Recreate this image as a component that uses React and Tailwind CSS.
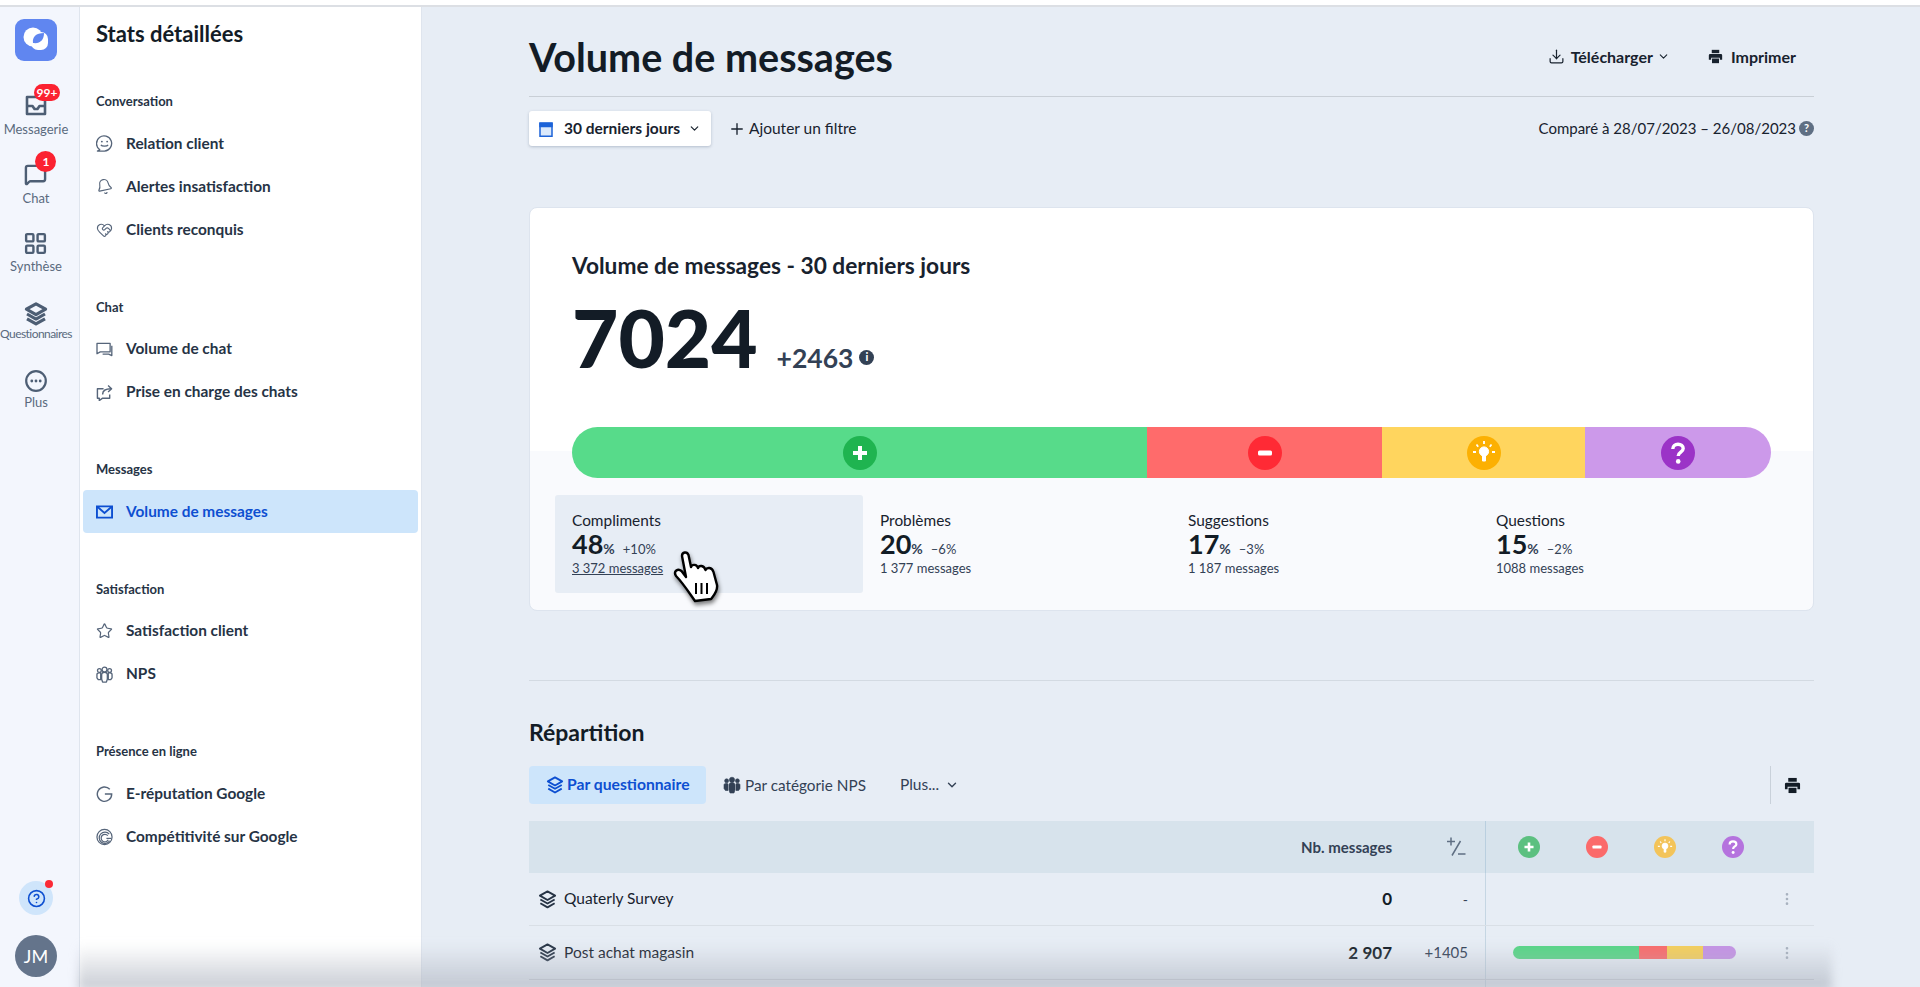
import React from 'react';
import { Bell, HeartHandshake, Star, ChevronDown, Plus, Download, LayoutGrid, MoreVertical, MessageSquare, HelpCircle } from 'lucide-react';

function Inbox({ className }) {
  return (
    <svg viewBox="0 0 22 22" className={className} fill="none" stroke="currentColor" strokeWidth="2.6" strokeLinejoin="round">
      <path d="M2 3h18v17H2z" />
      <path d="M2 12h5.5l2 3h3l2-3H20" />
    </svg>
  );
}

function Stack({ className, strokeWidth = 2 }) {
  return (
    <svg viewBox="0 0 20 20" className={className} fill="none" stroke="currentColor" strokeWidth={strokeWidth} strokeLinejoin="round">
      <path d="M10 1.5 18 6l-8 4.5L2 6z" />
      <path d="m2.5 10 7.5 4.2 7.5-4.2" />
      <path d="m2.5 14 7.5 4.3 7.5-4.3" />
    </svg>
  );
}

function People({ className, filled }) {
  return (
    <svg viewBox="0 0 18 18" className={className} fill={filled ? 'currentColor' : 'none'} stroke="currentColor" strokeWidth={filled ? 0.6 : 1.4} strokeLinejoin="round">
      <circle cx="3.6" cy="4.8" r="2" />
      <circle cx="14.4" cy="4.8" r="2" />
      <path d="M1 9c0-1 1-1.8 2.6-1.8S5 8 5 9v5.5H2.4L1 12.5zM17 9c0-1-1-1.8-2.6-1.8S13 8 13 9v5.5h2.6l1.4-2z" />
      <circle cx="9" cy="3.8" r="2.6" />
      <path d="M6 9c0-1.4 1.2-2.4 3-2.4s3 1 3 2.4v5l-1 3H7l-1-3z" />
    </svg>
  );
}

function PrinterSolid({ className }) {
  return (
    <svg viewBox="0 0 18 18" className={className} fill="currentColor">
      <path d="M4.5 1h9v4h-9z" />
      <path d="M2.5 6h13A1.5 1.5 0 0 1 17 7.5V13h-2.8v-2.6H3.8V13H1V7.5A1.5 1.5 0 0 1 2.5 6z" />
      <path d="M4.8 11.4h8.4V17H4.8z" />
    </svg>
  );
}

function SmileBubble({ className }) {
  return (
    <svg viewBox="0 0 18 18" className={className} fill="none" stroke="currentColor" strokeWidth="1.4">
      <path d="M4 15.6A8 8 0 1 1 9 17H1.5z" strokeLinejoin="round" />
      <circle cx="6.2" cy="7" r="1" fill="currentColor" stroke="none" />
      <circle cx="11.8" cy="7" r="1" fill="currentColor" stroke="none" />
      <path d="M5.2 10.4c1 1.9 6.6 1.9 7.6 0" />
    </svg>
  );
}

function ChatBoxes({ className }) {
  return (
    <svg viewBox="0 0 18 16" className={className} fill="none" stroke="currentColor" strokeWidth="1.4" strokeLinejoin="round">
      <path d="M1 1.5h14v9H4.5L1 12.5z" />
      <path d="M16.8 4v10.5L13.5 13H7" />
    </svg>
  );
}

function ChatShare({ className }) {
  return (
    <svg viewBox="0 0 18 18" className={className} fill="none" stroke="currentColor" strokeWidth="1.5" strokeLinejoin="round">
      <path d="M8 5H1.5v10h2v2.5L7 15h7.5v-4" />
      <path d="M7 11c0-4 3-6 9-6" />
      <path d="M12.8 1.5 16.5 5l-3.7 3.5" />
    </svg>
  );
}

function GoogleG({ className }) {
  return (
    <svg viewBox="0 0 18 18" className={className} fill="none" stroke="currentColor" strokeWidth="1.5">
      <path d="M14.6 4A7.6 7.6 0 1 0 16.6 9H9.4" />
    </svg>
  );
}

function Rings({ className }) {
  return (
    <svg viewBox="0 0 18 18" className={className} fill="none" stroke="currentColor" strokeWidth="1.3">
      <circle cx="9" cy="9" r="8" />
      <path d="M14 6A6 6 0 1 0 14.5 13" />
      <path d="M12.5 7.5A4 4 0 1 0 13 12" />
      <path d="M11 10.5h5" />
    </svg>
  );
}

function MailIcon({ className }) {
  return (
    <svg viewBox="0 0 18 14" className={className} fill="none" stroke="currentColor" strokeWidth="2">
      <path d="M1 1h16v12H1z" />
      <path d="M1.5 1.5 9 8l7.5-6.5" />
    </svg>
  );
}

function MoreCircle() {
  return (
    <svg viewBox="0 0 22 22" className="w-[22px] h-[22px]" fill="none" stroke="currentColor" strokeWidth="2.2">
      <circle cx="11" cy="11" r="9.8" />
      <g fill="currentColor" stroke="none">
        <circle cx="6.8" cy="11" r="1.4" />
        <circle cx="11" cy="11" r="1.4" />
        <circle cx="15.2" cy="11" r="1.4" />
      </g>
    </svg>
  );
}

function Logo() {
  return (
    <svg viewBox="0 0 42 42" className="w-[42px] h-[42px]">
      <rect width="42" height="42" rx="9" fill="#6086f0" />
      <circle cx="18" cy="18" r="9.5" fill="#fff" />
      <rect x="16" y="13" width="17" height="18" rx="7" fill="#fff" />
      <path d="M18 24c-1-6 3-10 11-10 0 7-4 11-11 10z" fill="#6086f0" />
    </svg>
  );
}

function Circle({ kind, color, className }) {
  return (
    <svg viewBox="0 0 34 34" className={className}>
      <circle cx="17" cy="17" r="17" fill={color} />
      {kind === 'plus' && <path d="M17 10v14M10 17h14" stroke="#fff" strokeWidth="4" />}
      {kind === 'minus' && <rect x="10" y="14.5" width="14" height="5" rx="1.5" fill="#fff" />}
      {kind === 'bulb' && (
        <g fill="#fff" stroke="#fff">
          <circle cx="17" cy="15.5" r="4.6" />
          <path d="M15.5 19h3v6h-3z" />
          <path d="M17 5v3M9.5 8.5l1.7 2.2M24.5 8.5l-1.7 2.2M6 16h3M25 16h3" strokeWidth="1.8" />
        </g>
      )}
      {kind === 'question' && (
        <g>
          <path d="M11.8 13c0-3 2.3-4.8 5.2-4.8s5.2 1.7 5.2 4.4c0 3.6-5 3.6-5 7.4" fill="none" stroke="#fff" strokeWidth="3.4" />
          <circle cx="17.2" cy="25.4" r="2.3" fill="#fff" />
        </g>
      )}
    </svg>
  );
}

function Hand({ className }) {
  return (
    <svg viewBox="0 0 46 54" className={className}>
      <path
        d="M9 6C9 2 14 1 15.5 5L18 17C19 14 24 14 25 18C26 15 31 15 32.5 20C34 17 39 17 40.5 22L44 35C45 41 41 45 38 49L22 51C17 44 10 33 3 26C0 21 5 18 8.5 21L13 27Z"
        fill="#fff"
        stroke="#000"
        strokeWidth="2.4"
        strokeLinejoin="round"
      />
      <path d="M23 33v11M28.5 33v11M34 33v11" stroke="#000" strokeWidth="2" />
    </svg>
  );
}

const railItems = [
  { label: 'Messagerie', icon: <Inbox className="w-[22px] h-[22px]" />, badge: '99+', labelClass: 'mt-[4px] text-[13px] leading-4 text-[#5a6a7e] whitespace-nowrap' },
  { label: 'Chat', icon: <MessageSquare size={23} strokeWidth={2.5} />, badge: '1', labelClass: 'mt-[4px] text-[13px] leading-4 text-[#5a6a7e] whitespace-nowrap' },
  { label: 'Synthèse', icon: <LayoutGrid size={25} strokeWidth={2.3} />, labelClass: 'mt-[3px] text-[13px] leading-4 text-[#5a6a7e] whitespace-nowrap' },
  { label: 'Questionnaires', icon: <Stack className="w-[24px] h-[24px] translate-y-[2px]" strokeWidth={2.6} />, labelClass: 'mt-[2px] text-[12px] leading-4 text-[#5a6a7e] tracking-[-0.55px] whitespace-nowrap' },
  { label: 'Plus', icon: <MoreCircle />, labelClass: 'mt-[1px] text-[13px] leading-4 text-[#5a6a7e] whitespace-nowrap' },
];

const menu = [
  {
    title: 'Conversation',
    items: [
      { label: 'Relation client', icon: <SmileBubble className="w-[17px] h-[17px]" /> },
      { label: 'Alertes insatisfaction', icon: <Bell size={17} strokeWidth={1.6} className="-rotate-12" /> },
      { label: 'Clients reconquis', icon: <HeartHandshake size={18} strokeWidth={1.6} /> },
    ],
  },
  {
    title: 'Chat',
    items: [
      { label: 'Volume de chat', icon: <ChatBoxes className="w-[17px] h-[15px]" /> },
      { label: 'Prise en charge des chats', icon: <ChatShare className="w-[17px] h-[17px]" /> },
    ],
  },
  {
    title: 'Messages',
    items: [{ label: 'Volume de messages', active: true, icon: <MailIcon className="w-[17px] h-[14px]" /> }],
  },
  {
    title: 'Satisfaction',
    items: [
      { label: 'Satisfaction client', icon: <Star size={18} strokeWidth={1.7} /> },
      { label: 'NPS', icon: <People className="w-[17px] h-[17px]" /> },
    ],
  },
  {
    title: 'Présence en ligne',
    items: [
      { label: 'E-réputation Google', icon: <GoogleG className="w-[18px] h-[18px]" /> },
      { label: 'Compétitivité sur Google', icon: <Rings className="w-[18px] h-[18px]" /> },
    ],
  },
];

const stats = [
  { label: 'Compliments', pct: '48', delta: '+10%', count: '3\u202f372 messages', hover: true },
  { label: 'Problèmes', pct: '20', delta: '–6%', count: '1\u202f377 messages' },
  { label: 'Suggestions', pct: '17', delta: '–3%', count: '1\u202f187 messages' },
  { label: 'Questions', pct: '15', delta: '–2%', count: '1088 messages' },
];

export default function App() {
  return (
    <div className="relative h-screen w-full overflow-hidden flex flex-col bg-white font-[Lato,sans-serif] text-[#18222e]">
      <div className="h-[7px] shrink-0 border-b-2 border-[#dcdfe4]" />
      <div className="flex flex-1 min-h-0">
        {/* rail */}
        <aside className="w-[80px] shrink-0 pr-[7px] bg-[#f3f6fd] border-r border-[#dfe5ee] flex flex-col items-center text-[#4d5e74]">
          <div className="mt-[12px]">
            <Logo />
          </div>
          <nav className="mt-[32px] flex flex-col gap-[25px] items-center">
            {railItems.map((it) => (
              <div key={it.label} className="relative flex flex-col items-center h-[44px]">
                <div className="relative h-[24px] flex items-center">
                  {it.icon}
                  {it.badge && (
                    <span
                      className={
                        it.badge === '1'
                          ? 'absolute -top-[11px] left-[11px] w-[21px] h-[21px] rounded-full bg-[#fb2231] text-white text-[12px] font-bold flex items-center justify-center'
                          : 'absolute -top-[9px] left-[9px] w-[26px] h-[17px] rounded-full bg-[#fb2231] text-white text-[12px] font-bold flex items-center justify-center'
                      }
                    >
                      {it.badge}
                    </span>
                  )}
                </div>
                <span className={it.labelClass}>{it.label}</span>
              </div>
            ))}
          </nav>
          <div className="mt-auto pb-[10px] flex flex-col items-center gap-[20px]">
            <div className="relative w-[34px] h-[34px] rounded-full bg-[#cfe5fb] flex items-center justify-center text-[#0d4fd1]">
              <HelpCircle size={19} strokeWidth={2} />
              <span className="absolute -top-[1px] right-0 w-[8px] h-[8px] rounded-full bg-[#fb2a36]" />
            </div>
            <div className="w-[42px] h-[42px] rounded-full bg-[#64748b] text-white text-[18px] flex items-center justify-center">JM</div>
          </div>
        </aside>

        {/* sidebar */}
        <aside className="w-[342px] shrink-0 bg-white border-r border-[#dfe5ee] flex flex-col">
          <h2 className="mt-[13px] pl-[16px] text-[22px] leading-7 font-bold text-[#131c26]">Stats détaillées</h2>
          <div className="mt-[32px] flex flex-col gap-[34.5px]">
            {menu.map((sec) => (
              <section key={sec.title}>
                <div className="h-[42px] pl-[16px] pt-[2px] flex items-center text-[13px] font-bold text-[#263345]">{sec.title}</div>
                {sec.items.map((it) => (
                  <div
                    key={it.label}
                    className={
                      it.active
                        ? 'mx-[3px] h-[43px] pl-[13px] flex items-center gap-[13px] rounded-[4px] bg-[#cde5fb] text-[#0d4fd1] text-[15.4px] font-bold'
                        : 'mx-[3px] h-[43px] pl-[13px] flex items-center gap-[13px] text-[#263345] text-[15.4px] font-bold'
                    }
                  >
                    <span className={it.active ? 'w-[17px] flex justify-center text-[#0d4fd1]' : 'w-[17px] flex justify-center text-[#56657a]'}>
                      {it.icon}
                    </span>
                    {it.label}
                  </div>
                ))}
              </section>
            ))}
          </div>
        </aside>

        {/* main */}
        <main className="flex-1 min-w-0 bg-[#e7edf5] pl-[107px] pr-[106px]">
          <header className="h-[90px] pt-[10px] border-b border-[#c9cfd6] flex items-center justify-between">
            <h1 className="text-[39.5px] font-bold text-[#131c26]">Volume de messages</h1>
            <div className="flex items-center text-[16px] font-bold text-[#18222e] pr-[18px]">
              <Download size={17} strokeWidth={1.7} />
              <span className="ml-[6px]">Télécharger</span>
              <ChevronDown size={13} strokeWidth={2} className="ml-[4px]" />
              <PrinterSolid className="ml-[38px] w-[15px] h-[15px]" />
              <span className="ml-[8px]">Imprimer</span>
            </div>
          </header>

          <div className="mt-[14px] h-[35px] flex items-center">
            <button className="h-[35px] w-[182px] pl-[10px] rounded-[3px] bg-white shadow-[0_1px_3px_rgba(60,80,110,0.3)] flex items-center text-[15.5px] font-bold">
              <svg viewBox="0 0 14 16" className="w-[14px] h-[16px] text-[#1d63d8]" fill="none" stroke="currentColor" strokeWidth="1.5">
                <path d="M1 2.5h12v12.7H1z" fill="#dbe9fb" />
                <path d="M1 2h12v3.4H1z" fill="currentColor" />
              </svg>
              <span className="ml-[11px]">30 derniers jours</span>
              <ChevronDown size={13} strokeWidth={2.2} className="ml-[8px]" />
            </button>
            <Plus size={18} strokeWidth={1.8} className="ml-[17px]" />
            <span className="ml-[3px] text-[15.5px]">Ajouter un filtre</span>
            <span className="ml-auto text-[15px] text-[#18222e]">Comparé à 28/07/2023 – 26/08/2023</span>
            <span className="ml-[3px] w-[15px] h-[15px] rounded-full bg-[#5f6f83] text-white text-[11px] font-bold flex items-center justify-center">?</span>
          </div>

          {/* card */}
          <section className="mt-[61px] h-[404px] rounded-[8px] border border-[#dde4ee] bg-[linear-gradient(#fff_243px,#f9fafd_243px)] px-[42px] pt-[44px]">
            <h3 className="text-[22.7px] leading-7 font-bold text-[#18222e]">Volume de messages - 30 derniers jours</h3>
            <div className="mt-[17px] h-[80px] flex items-baseline">
              <span className="text-[80px] leading-[80px] font-black text-[#131c26]">7024</span>
              <span className="ml-[19px] text-[26.5px] font-bold text-[#334155]">+2463</span>
              <span className="ml-[6px] w-[15px] h-[15px] rounded-full bg-[#334155] text-white text-[11px] font-black flex items-center justify-center self-end mb-[12px]">i</span>
            </div>
            <div className="mt-[50px] h-[51px] w-[1199px] flex rounded-full overflow-hidden">
              <div className="w-[575px] bg-[#57db8a] flex items-center justify-center">
                <Circle kind="plus" color="#1fb450" className="w-[34px] h-[34px]" />
              </div>
              <div className="w-[235px] bg-[#ff6b6b] flex items-center justify-center">
                <Circle kind="minus" color="#ff2a35" className="w-[34px] h-[34px]" />
              </div>
              <div className="w-[203px] bg-[#ffd55e] flex items-center justify-center">
                <Circle kind="bulb" color="#fcb002" className="w-[34px] h-[34px]" />
              </div>
              <div className="w-[186px] bg-[#cc99ea] flex items-center justify-center">
                <Circle kind="question" color="#9b33c7" className="w-[34px] h-[34px]" />
              </div>
            </div>
            <div className="mt-[17px] -ml-[17px] flex">
              {stats.map((s) => (
                <div
                  key={s.label}
                  className={
                    s.hover
                      ? 'relative shrink-0 w-[308px] h-[98px] pl-[17px] pt-[15px] rounded-[3px] bg-[#e7edf5]'
                      : 'relative shrink-0 w-[308px] h-[98px] pl-[17px] pt-[15px]'
                  }
                >
                  <div className="text-[15.4px] leading-[20px] text-[#18222e]">{s.label}</div>
                  <div className="flex items-baseline h-[27px]">
                    <span className="text-[27px] leading-[27px] font-bold text-[#131c26]">{s.pct}</span>
                    <span className="text-[14px] font-bold text-[#334155]">%</span>
                    <span className="ml-[8px] text-[13px] text-[#334155]">{s.delta}</span>
                  </div>
                  <div className={s.hover ? 'mt-[2px] text-[13px] leading-[18px] text-[#334155] underline' : 'mt-[2px] text-[13px] leading-[18px] text-[#334155]'}>
                    {s.count}
                  </div>
                  {s.hover && <Hand className="absolute left-[118px] top-[55px] w-[46px] h-[54px] drop-shadow-[1px_3px_2px_rgba(0,0,0,0.5)]" />}
                </div>
              ))}
            </div>
          </section>

          <div className="mt-[69px] border-t border-[#d3dae2]" />

          <h2 className="mt-[36px] text-[23px] leading-[30px] font-bold text-[#131c26]">Répartition</h2>
          <div className="mt-[19px] h-[38px] flex items-center">
            <div className="h-[38px] w-[177px] pl-[17px] rounded-[4px] bg-[#cde5fb] text-[#0d4fd1] text-[15.7px] font-bold flex items-center gap-[3px]">
              <Stack className="w-[18px] h-[18px]" />
              Par questionnaire
            </div>
            <People filled className="ml-[17px] w-[18px] h-[18px] text-[#334155]" />
            <span className="ml-[4px] text-[15.3px] text-[#334155]">Par catégorie NPS</span>
            <span className="ml-[34px] text-[15.5px] text-[#334155]">Plus...</span>
            <ChevronDown size={14} strokeWidth={2.4} className="ml-[6px] text-[#334155]" />
            <div className="ml-auto h-[38px] w-[44px] border-l border-[#c9d1da] flex items-center justify-center">
              <PrinterSolid className="w-[17px] h-[17px] text-[#131c26]" />
            </div>
          </div>

          <div className="mt-[17px] h-[52px] flex items-center bg-[#d7e3ec]">
            <div className="flex-1" />
            <div className="w-[120px] text-right text-[15px] font-bold text-[#334155]">Nb. messages</div>
            <div className="w-[76px] flex justify-end pr-[2px] text-[#5f6f83]">
              <svg viewBox="0 0 20 22" className="w-[20px] h-[22px]" fill="none" stroke="currentColor" strokeWidth="1.5">
                <path d="M1 5.5h8M5 1.5v8M14.5 5 6 19.5M12 18h7.5" />
              </svg>
            </div>
            <div className="w-[17px]" />
            <div className="w-[329px] h-full border-l border-[#b9cfdf] pl-[32px] flex items-center gap-[46px]">
              <Circle kind="plus" color="#5cc080" className="w-[22px] h-[22px]" />
              <Circle kind="minus" color="#fb6a6a" className="w-[22px] h-[22px]" />
              <Circle kind="bulb" color="#f3c45a" className="w-[22px] h-[22px]" />
              <Circle kind="question" color="#b573de" className="w-[22px] h-[22px]" />
            </div>
          </div>
          <div className="h-[53px] flex items-center border-b border-[#d9dfe6]">
            <Stack className="ml-[9px] w-[19px] h-[19px] text-[#263345]" />
            <span className="ml-[7px] flex-1 text-[15.5px] text-[#18222e]">Quaterly Survey</span>
            <div className="w-[120px] text-right text-[17px] font-bold text-[#131c26]">0</div>
            <div className="w-[76px] text-right text-[14px] text-[#334155]">-</div>
            <div className="w-[17px]" />
            <div className="w-[329px] h-full border-l border-[#c5d6e3] flex items-center justify-end pr-[19px] text-[#a8b2bf]">
              <MoreVertical size={16} strokeWidth={2} />
            </div>
          </div>
          <div className="h-[54px] flex items-center border-b border-[#c9cfd6]">
            <Stack className="ml-[9px] w-[19px] h-[19px] text-[#263345]" />
            <span className="ml-[7px] flex-1 text-[15.5px] text-[#18222e]">Post achat magasin</span>
            <div className="w-[120px] text-right text-[17px] font-bold text-[#131c26]">2{'\u202f'}907</div>
            <div className="w-[76px] text-right text-[15px] text-[#334155]">+1405</div>
            <div className="w-[17px]" />
            <div className="w-[329px] h-full border-l border-[#c5d6e3] flex items-center pl-[27px] pr-[19px] text-[#a8b2bf]">
              <div className="w-[223px] h-[13px] rounded-full overflow-hidden flex">
                <div className="w-[126px] bg-[#57d686]" />
                <div className="w-[28px] bg-[#fb6a6a]" />
                <div className="w-[36px] bg-[#f6cf5a]" />
                <div className="w-[33px] bg-[#c593e6]" />
              </div>
              <MoreVertical size={16} strokeWidth={2} className="ml-auto" />
            </div>
          </div>
          <div className="h-[20px] flex">
            <div className="flex-1" />
            <div className="w-[329px] border-l border-[#c5d6e3]" />
          </div>
        </main>
      </div>
      {/* video fade along the bottom edge */}
      <div className="pointer-events-none absolute left-[78px] right-[88px] -bottom-[4px] h-[48px] bg-gradient-to-t from-[#aeb4bf]/70 to-transparent blur-[5px]" />
    </div>
  );
}
